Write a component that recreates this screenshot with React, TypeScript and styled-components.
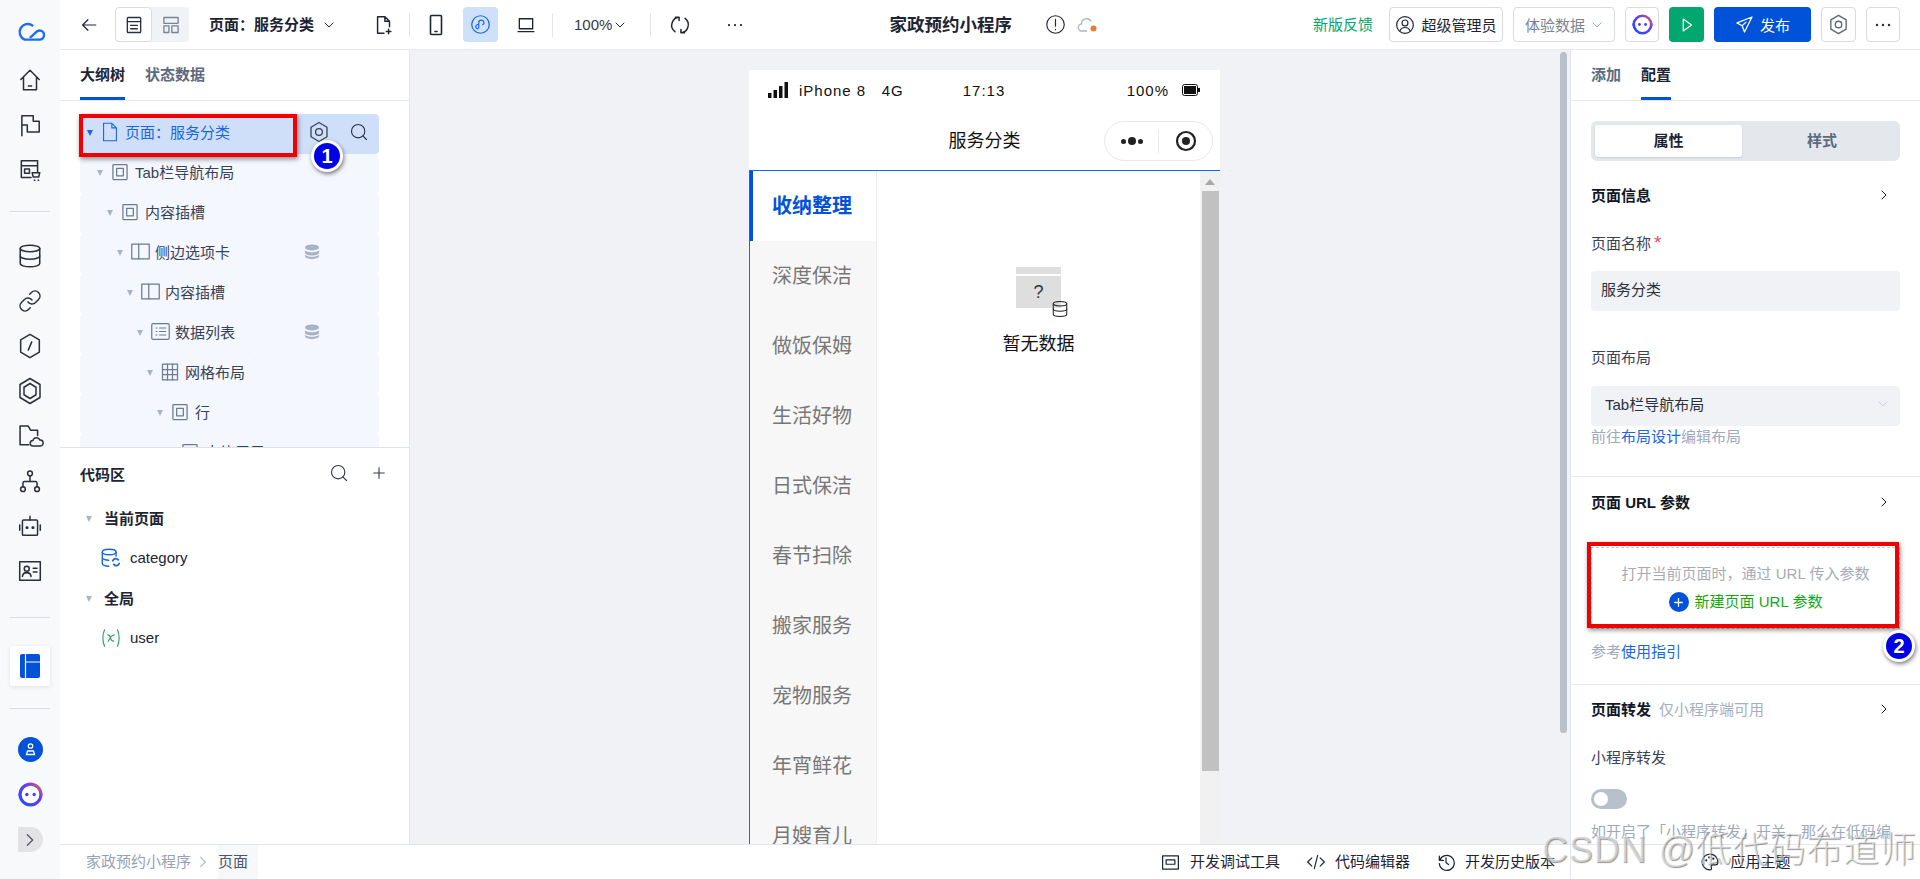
import React from 'react';
import styled, { createGlobalStyle } from 'styled-components';
import { Database, Link as LinkIcon, Search, Plus } from 'lucide-react';

const GlobalStyle = createGlobalStyle`
  html, body {
    margin: 0;
    padding: 0;
    height: 100%;
    overflow: hidden;
    background: #fff;
    font-family: "Liberation Sans", "Noto Sans CJK SC", sans-serif;
    font-size: 15px;
    color: #1d2433;
  }
  * { box-sizing: border-box; }
`;

const Page = styled.div`
  position: relative;
  display: flex;
  width: 1920px;
  height: 879px;
  overflow: hidden;
`;

const Rail = styled.nav`
  display: flex;
  flex-direction: column;
  align-items: center;
  flex: 0 0 60px;
  padding-top: 8px;
  background: #f8f9fb;
  color: #2a2f3a;
`;

const RailItem = styled.div<{ $h?: number }>`
  display: flex;
  align-items: center;
  justify-content: center;
  flex: none;
  width: 40px;
  height: ${(p) => p.$h ?? 45}px;
`;

const RailRule = styled.div<{ $before: number; $after: number }>`
  flex: none;
  width: 40px;
  height: 1px;
  margin: ${(p) => p.$before}px 0 ${(p) => p.$after}px;
  background: #d8dde5;
`;

const RailCard = styled.div`
  display: flex;
  align-items: center;
  justify-content: center;
  flex: none;
  width: 40px;
  height: 40px;
  border-radius: 3px;
  background: #fff;
  box-shadow: 0 1px 4px rgba(30, 50, 90, 0.12);
`;

const Expander = styled.div`
  display: flex;
  align-items: center;
  justify-content: center;
  flex: none;
  width: 25px;
  height: 25px;
  margin-top: 10px;
  border-radius: 0 13px 13px 0;
  background: #e3e3e5;
  color: #555c68;
`;

const Main = styled.div`
  display: flex;
  flex-direction: column;
  flex: 1;
  min-width: 0;
`;

const TopBar = styled.header`
  display: flex;
  align-items: center;
  flex: 0 0 50px;
  padding: 0 20px;
  border-bottom: 1px solid #e6e8ec;
  background: #fff;
  color: #1d2433;
`;

const Spot = styled.div<{ $ml?: number }>`
  display: flex;
  align-items: center;
  justify-content: center;
  flex: none;
  margin-left: ${(p) => p.$ml ?? 0}px;
`;

const ViewSwitch = styled.div`
  display: flex;
  flex: none;
  width: 74px;
  height: 35px;
  margin-left: 17px;
  border-radius: 4px;
  background: #f0f2f5;
`;

const ViewCell = styled.div<{ $on?: boolean }>`
  display: flex;
  align-items: center;
  justify-content: center;
  width: 37px;
  border-radius: 4px;
  background: ${(p) => (p.$on ? '#fff' : 'transparent')};
  border: 1px solid ${(p) => (p.$on ? '#d8dce3' : 'transparent')};
  color: ${(p) => (p.$on ? '#2a3040' : '#75829a')};
`;

const PageName = styled.div`
  flex: none;
  margin-left: 20px;
  font-weight: 700;
  line-height: 20px;
`;

const BarRule = styled.div<{ $ml: number }>`
  flex: none;
  width: 1px;
  height: 24px;
  margin-left: ${(p) => p.$ml}px;
  background: #e3e5e9;
`;

const DeviceBtn = styled.div<{ $on?: boolean; $ml?: number }>`
  display: flex;
  align-items: center;
  justify-content: center;
  flex: none;
  width: 35px;
  height: 35px;
  margin-left: ${(p) => p.$ml ?? 0}px;
  border-radius: 4px;
  background: ${(p) => (p.$on ? '#cfe0fb' : 'transparent')};
`;

const Zoom = styled.div`
  flex: none;
  margin-left: 21px;
  line-height: 20px;
  color: #333a48;
`;

const AppTitle = styled.div`
  flex: none;
  margin-left: 145px;
  font-size: 17.5px;
  font-weight: 700;
  line-height: 24px;
`;

const BarRight = styled.div`
  display: flex;
  align-items: center;
  gap: 10px;
  margin-left: auto;
`;

const Feedback = styled.div`
  margin-right: 6px;
  color: #00a870;
  line-height: 20px;
`;

const OutlineBtn = styled.div<{ $w: number; $muted?: boolean }>`
  display: flex;
  align-items: center;
  justify-content: center;
  gap: 6px;
  flex: none;
  width: ${(p) => p.$w}px;
  height: 35px;
  border: 1px solid #d6dae1;
  border-radius: 4px;
  background: #fff;
  color: ${(p) => (p.$muted ? '#7c8494' : '#1d2433')};
  white-space: nowrap;
`;

const SolidBtn = styled.div<{ $w: number; $bg: string }>`
  display: flex;
  align-items: center;
  justify-content: center;
  gap: 6px;
  flex: none;
  width: ${(p) => p.$w}px;
  height: 35px;
  border-radius: 4px;
  background: ${(p) => p.$bg};
  color: #fff;
`;

const Body = styled.div`
  display: flex;
  flex: 1;
  min-height: 0;
`;

const LeftPanel = styled.aside`
  display: flex;
  flex-direction: column;
  flex: 0 0 350px;
  border-right: 1px solid #e3e6eb;
  background: #fff;
`;

const Tabs = styled.div`
  display: flex;
  gap: 20px;
  flex: 0 0 50px;
  padding: 0 20px;
  border-bottom: 1px solid #e6e8ec;
`;

const Tab = styled.div<{ $on?: boolean }>`
  height: 50px;
  border-bottom: 3px solid ${(p) => (p.$on ? '#0052d9' : 'transparent')};
  color: ${(p) => (p.$on ? '#1d2433' : '#5c6a80')};
  font-weight: 700;
  line-height: 49px;
`;

const TreeArea = styled.div`
  position: relative;
  flex: 0 0 347px;
  padding: 13px 30px 0 20px;
  border-bottom: 1px solid #dfe2e8;
  overflow: hidden;
`;

const TreeRow = styled.div<{ $level: number; $active?: boolean }>`
  display: flex;
  align-items: center;
  height: 40px;
  padding: 0 0 5px ${(p) => 7 + p.$level * 10}px;
  border-radius: 4px;
  background: ${(p) => (p.$active ? '#cfdffa' : '#f4f7fe')};
  color: ${(p) => (p.$active ? '#1a66e0' : '#384256')};
`;

const Caret = styled.span<{ $blue?: boolean }>`
  flex: none;
  width: 0;
  height: 0;
  margin: 3px 9px 0 0;
  border-left: 3.5px solid transparent;
  border-right: 3.5px solid transparent;
  border-top: 6px solid ${(p) => (p.$blue ? '#1a66e0' : '#aab4c6')};
`;

const TreeIcon = styled.span`
  display: flex;
  justify-content: center;
  flex: none;
  width: 16px;
  margin-right: 7px;
  color: #6c7a92;
  svg {
    flex: none;
  }
`;

const PageIcon = styled(TreeIcon)`
  color: #1a66e0;
`;

const RowTail = styled.span<{ $gap?: number; $pr: number }>`
  display: flex;
  align-items: center;
  gap: ${(p) => p.$gap ?? 0}px;
  margin-left: auto;
  padding-right: ${(p) => p.$pr}px;
`;

const Callout = styled.div<{ $l: number; $t: number; $w: number; $h: number }>`
  position: absolute;
  left: ${(p) => p.$l}px;
  top: ${(p) => p.$t}px;
  width: ${(p) => p.$w}px;
  height: ${(p) => p.$h}px;
  border: 4px solid #f00000;
  box-shadow: 1px 2px 5px rgba(0, 0, 0, 0.45);
  pointer-events: none;
`;

const Badge = styled.div<{ $l: number; $t: number }>`
  position: absolute;
  left: ${(p) => p.$l}px;
  top: ${(p) => p.$t}px;
  width: 32px;
  height: 32px;
  border: 3px solid #fff;
  border-radius: 50%;
  background: #0000e6;
  box-shadow: 1px 2px 4px rgba(0, 0, 0, 0.5);
  color: #fff;
  font-family: "Liberation Sans", sans-serif;
  font-size: 20px;
  font-weight: 700;
  line-height: 26px;
  text-align: center;
`;

const CodeHead = styled.div`
  display: flex;
  align-items: center;
  flex: 0 0 52px;
  padding: 0 21px 2px 20px;
  font-weight: 700;
`;

const CodeTools = styled.div`
  display: flex;
  align-items: center;
  gap: 21px;
  margin-left: auto;
  color: #333a48;
`;

const CodeRow = styled.div<{ $group?: boolean }>`
  display: flex;
  align-items: center;
  flex: 0 0 40px;
  padding: 0 0 5px ${(p) => (p.$group ? 26 : 40)}px;
  font-weight: ${(p) => (p.$group ? 700 : 400)};
  color: #1d2433;
`;

const CodeCaret = styled(Caret)`
  margin-right: 12px;
`;

const CodeIcon = styled.span`
  display: flex;
  justify-content: center;
  flex: none;
  width: 22px;
  margin-right: 8px;
`;

const Stage = styled.main`
  position: relative;
  display: flex;
  justify-content: center;
  flex: 1;
  min-width: 0;
  padding: 20px 11px 0 0;
  background: #f0f2f6;
  overflow: hidden;
`;

const StageThumb = styled.div`
  position: absolute;
  top: 2px;
  right: 3px;
  width: 7px;
  height: 681px;
  border-radius: 4px;
  background: #b8c0cc;
`;

const Phone = styled.div`
  display: flex;
  flex-direction: column;
  flex: 0 0 471px;
  background: #fff;
`;

const StatusBar = styled.div`
  display: grid;
  grid-template-columns: 1fr auto 1fr;
  align-items: center;
  flex: 0 0 42px;
  padding: 0 20px 2px 19px;
  color: #111;
  letter-spacing: 1px;
`;

const StatusSide = styled.div<{ $end?: boolean }>`
  display: flex;
  align-items: center;
  justify-content: ${(p) => (p.$end ? 'flex-end' : 'flex-start')};
  gap: ${(p) => (p.$end ? 13 : 10)}px;
  white-space: pre;
`;

const NavBar = styled.div`
  position: relative;
  flex: 0 0 58px;
  font-size: 18px;
  line-height: 58px;
  text-align: center;
  color: #111;
`;

const Capsule = styled.div`
  position: absolute;
  top: 9px;
  right: 7px;
  display: flex;
  align-items: center;
  width: 109px;
  height: 40px;
  border: 1px solid #e8e8e8;
  border-radius: 20px;
  background: #fff;
`;

const CapsuleCell = styled.div`
  display: flex;
  align-items: center;
  justify-content: center;
  flex: 1;
  height: 24px;
  & + & {
    border-left: 1px solid #ececec;
  }
`;

const Dot = styled.span<{ $big?: boolean }>`
  width: ${(p) => (p.$big ? 8 : 5)}px;
  height: ${(p) => (p.$big ? 8 : 5)}px;
  margin: 0 1px;
  border-radius: 50%;
  background: #222;
`;

const SideTabs = styled.div`
  display: flex;
  flex: 1;
  min-height: 0;
  border-top: 1px solid #1268f5;
  border-left: 1px solid #1268f5;
  overflow: hidden;
`;

const SideList = styled.div`
  flex: 0 0 127px;
  border-right: 1px solid #ececec;
  background: #f7f7f7;
`;

const SideItem = styled.div<{ $on?: boolean }>`
  height: 70px;
  padding-left: ${(p) => (p.$on ? 19 : 22)}px;
  border-left: ${(p) => (p.$on ? '3px solid #0052d9' : 'none')};
  background: ${(p) => (p.$on ? '#fff' : 'transparent')};
  color: ${(p) => (p.$on ? '#0052d9' : '#777')};
  font-size: 20px;
  font-weight: ${(p) => (p.$on ? 700 : 400)};
  line-height: 70px;
`;

const SideContent = styled.div`
  display: flex;
  flex-direction: column;
  align-items: center;
  flex: 1;
  padding-top: 96px;
`;

const EmptyBox = styled.div`
  position: relative;
  width: 45px;
  height: 41px;
  border-top: 7px solid #dedede;
  background: linear-gradient(#fff 0 2px, #dedede 2px);
  color: #333;
  font-size: 18px;
  line-height: 36px;
  text-align: center;
`;

const EmptyDb = styled.span`
  position: absolute;
  right: -8px;
  bottom: -10px;
  display: flex;
  color: #222;
`;

const EmptyText = styled.div`
  margin-top: 24px;
  color: #111;
  font-size: 18px;
  line-height: 24px;
`;

const ScrollTrack = styled.div`
  display: flex;
  flex-direction: column;
  align-items: center;
  flex: 0 0 20px;
  background: #f1f1f1;
`;

const ScrollArrow = styled.span`
  width: 0;
  height: 0;
  margin: 8px 0 6px;
  border-left: 5px solid transparent;
  border-right: 5px solid transparent;
  border-bottom: 6px solid #a8a8a8;
`;

const ScrollThumb = styled.div`
  width: 17px;
  height: 580px;
  background: #c1c1c1;
`;

const RightPanel = styled.aside`
  display: flex;
  flex-direction: column;
  flex: 0 0 350px;
  border-left: 1px solid #e3e6eb;
  background: #fff;
  overflow: hidden;
`;

const Section = styled.div`
  display: flex;
  flex-direction: column;
  flex: none;
  padding: 0 20px;
`;

const Segment = styled.div`
  display: flex;
  height: 40px;
  margin-top: 20px;
  padding: 4px;
  border-radius: 6px;
  background: #e4e7ec;
`;

const SegmentItem = styled.div<{ $on?: boolean }>`
  flex: ${(p) => (p.$on ? '0 0 147px' : '1')};
  padding-left: ${(p) => (p.$on ? 0 : 6)}px;
  border-radius: 3px;
  background: ${(p) => (p.$on ? '#fff' : 'transparent')};
  box-shadow: ${(p) => (p.$on ? '0 1px 2px rgba(0,0,0,.12)' : 'none')};
  color: ${(p) => (p.$on ? '#1d2433' : '#5c6a80')};
  font-weight: 700;
  line-height: 32px;
  text-align: center;
`;

const SectionHead = styled.div<{ $mt: number }>`
  display: flex;
  align-items: center;
  height: 40px;
  margin-top: ${(p) => p.$mt}px;
  padding: 0 10px 3px 0;
  color: #111827;
  font-weight: 700;
`;

const HeadChevron = styled.span`
  display: flex;
  margin-left: auto;
`;

const HeadNote = styled.span`
  margin-left: 8px;
  color: #a6afbf;
  font-weight: 400;
`;

const FieldLabel = styled.div<{ $mt: number }>`
  height: 20px;
  margin-top: ${(p) => p.$mt}px;
  color: #384256;
  line-height: 20px;
`;

const Required = styled.span`
  margin-left: 3px;
  color: #e34d59;
  font-size: 19px;
  line-height: 0;
`;

const Field = styled.div<{ $mt: number; $pl: number }>`
  display: flex;
  align-items: center;
  height: 40px;
  margin-top: ${(p) => p.$mt}px;
  padding: 0 11px 5px ${(p) => p.$pl}px;
  border-radius: 4px;
  background: #f0f2f6;
  color: #2a3040;
`;

const Hint = styled.div<{ $mt: number }>`
  height: 20px;
  margin-top: ${(p) => p.$mt}px;
  color: #9ea9bd;
  line-height: 18px;
  white-space: nowrap;
`;

const TextLink = styled.span`
  color: #1a66e0;
`;

const Rule = styled.div<{ $mt: number }>`
  flex: 0 0 1px;
  margin-top: ${(p) => p.$mt}px;
  background: #e6e8ec;
`;

const ParamBox = styled.div`
  position: relative;
  display: flex;
  flex-direction: column;
  align-items: center;
  height: 82px;
  margin-top: 24px;
  padding-top: 16px;
  border: 1px dashed #c6cad2;
  color: #a6abb5;
`;

const ParamTip = styled.div`
  line-height: 20px;
`;

const ParamAdd = styled.div`
  display: flex;
  align-items: center;
  gap: 6px;
  margin-top: 8px;
  color: #12a812;
  line-height: 20px;
`;

const AddDot = styled.span`
  display: flex;
  align-items: center;
  justify-content: center;
  width: 20px;
  height: 20px;
  border-radius: 50%;
  background: #0052d9;
  color: #fff;
`;

const Toggle = styled.div`
  width: 36px;
  height: 20px;
  margin-top: 21px;
  padding: 3px;
  border-radius: 10px;
  background: #b8c0cc;
`;

const ToggleKnob = styled.div`
  width: 14px;
  height: 14px;
  border-radius: 50%;
  background: #fff;
`;

const BottomBar = styled.footer`
  display: flex;
  align-items: stretch;
  flex: 0 0 35px;
  border-top: 1px solid #e1e5ec;
  background: #fff;
  line-height: 34px;
`;

const Crumbs = styled.div`
  display: flex;
  align-items: center;
  padding-left: 26px;
  color: #97a1b3;
`;

const CrumbNow = styled.span`
  margin-left: 8px;
  padding-right: 10px;
  background: #f7f8fa;
  color: #4a556a;
`;

const CrumbArrow = styled.span`
  display: flex;
  margin-left: 5px;
  color: #b0b8c6;
`;

const Tools = styled.div`
  display: flex;
  align-items: center;
  gap: 26px;
  margin-left: auto;
  padding-right: 15px;
`;

const Tool = styled.div`
  display: flex;
  align-items: center;
  gap: 9px;
  color: #1d2433;
`;

const ThemeCell = styled.div`
  display: flex;
  align-items: center;
  justify-content: center;
  gap: 10px;
  flex: 0 0 350px;
  border-left: 1px solid #e3e6eb;
  color: #1d2433;
`;

const Watermark = styled.div`
  position: absolute;
  right: 3px;
  bottom: 7px;
  color: rgba(255, 255, 255, 0.55);
  font-size: 36px;
  font-weight: 300;
  letter-spacing: 0.9px;
  line-height: 44px;
  text-shadow: 1px 1px 1px rgba(90, 90, 90, 0.65);
  white-space: nowrap;
  pointer-events: none;
`;

const Ico = ({ s = 20, w = 1.6, c = 'currentColor', children }: { s?: number; w?: number; c?: string; children: React.ReactNode }) => (
  <svg width={s} height={s} viewBox="0 0 24 24" fill="none" stroke={c} strokeWidth={w} strokeLinecap="round" strokeLinejoin="round">
    {children}
  </svg>
);

const Chevron = ({ s = 12, c = 'currentColor', dir = 'down' }: { s?: number; c?: string; dir?: 'down' | 'right' }) => (
  <Ico s={s} c={c} w={2}>
    <path d={dir === 'down' ? 'M4 8l8 8 8-8' : 'M8 4l8 8-8 8'} />
  </Ico>
);

const Hexagon = ({ s = 20, c = 'currentColor', w = 1.6 }: { s?: number; c?: string; w?: number }) => (
  <Ico s={s} c={c} w={w}>
    <path d="M12 2.5l8 4.7v9.6l-8 4.7-8-4.7V7.2z" />
    <circle cx="12" cy="12" r="3.4" />
  </Ico>
);

const BotLogo = ({ s = 24, id }: { s?: number; id: string }) => (
  <svg width={s} height={s} viewBox="0 0 24 24">
    <defs>
      <linearGradient id={id} x1="0" y1="1" x2="1" y2="0">
        <stop offset="0" stopColor="#1f4dff" />
        <stop offset="0.65" stopColor="#6a3df0" />
        <stop offset="1" stopColor="#e0644a" />
      </linearGradient>
    </defs>
    <rect x="0.5" y="9" width="23" height="6" rx="3" fill={`url(#${id})`} />
    <circle cx="12" cy="12" r="10" fill="#fff" stroke={`url(#${id})`} strokeWidth="3" />
    <circle cx="8.5" cy="12" r="1.6" fill="#4a3df0" />
    <circle cx="15.5" cy="12" r="1.6" fill="#4a3df0" />
  </svg>
);

const FrameIcon = () => (
  <Ico s={20} w={1.5}>
    <rect x="3.5" y="3" width="17" height="18" rx="1" />
    <rect x="8" y="7.5" width="8" height="9" />
  </Ico>
);

const SplitIcon = () => (
  <Ico s={21} w={1.4}>
    <rect x="2" y="3.5" width="20" height="17" />
    <path d="M10 3.5v17" />
  </Ico>
);

const ListIcon = () => (
  <Ico s={21} w={1.4}>
    <rect x="2" y="3" width="20" height="18" rx="1.5" />
    <path d="M7 8h1M7 12h1M7 16h1M11 8h7M11 12h7M11 16h7" />
  </Ico>
);

const GridIcon = () => (
  <Ico s={20} w={1.5}>
    <rect x="3" y="2.5" width="18" height="19" />
    <path d="M9 2.5v19M15 2.5v19M3 9h18M3 15h18" />
  </Ico>
);

const DbBadge = () => (
  <svg width={16} height={16} viewBox="0 0 16 16" fill="#a6b2c6">
    <ellipse cx="8" cy="3.4" rx="7" ry="3" />
    <path d="M1 6.2c1.4 1.4 4 2 7 2s5.6-.6 7-2v2.6c0 1.6-3.1 2.8-7 2.8S1 10.4 1 8.8z" />
    <path d="M1 10.8c1.4 1.4 4 2 7 2s5.6-.6 7-2V12c0 1.6-3.1 3-7 3s-7-1.4-7-3z" />
  </svg>
);

const treeRows = [
  { level: 1, label: 'Tab栏导航布局', icon: <FrameIcon /> },
  { level: 2, label: '内容插槽', icon: <FrameIcon /> },
  { level: 3, label: '侧边选项卡', icon: <SplitIcon />, bound: true },
  { level: 4, label: '内容插槽', icon: <SplitIcon /> },
  { level: 5, label: '数据列表', icon: <ListIcon />, bound: true },
  { level: 6, label: '网格布局', icon: <GridIcon /> },
  { level: 7, label: '行', icon: <FrameIcon /> },
  { level: 8, label: '卡片展示', icon: <FrameIcon /> },
];

const sideItems = ['收纳整理', '深度保洁', '做饭保姆', '生活好物', '日式保洁', '春节扫除', '搬家服务', '宠物服务', '年宵鲜花', '月嫂育儿'];

const RailIcons = () => (
  <Rail>
    <RailItem $h={49}>
      <Ico s={31} c="#1a6ef0" w={1.9}>
        <path d="M13.5 6.5A6.3 6.3 0 1 0 7.5 17.5H19a3.5 3.5 0 0 0 0-7c-3 0-4.5 4-7 5" />
      </Ico>
    </RailItem>
    <RailItem>
      <Ico s={26} w={1.4}>
        <path d="M3.5 11.5L12 3l8.5 8.5M6 9.5V21h12V9.5M10.5 17.5h3" />
      </Ico>
    </RailItem>
    <RailItem>
      <Ico s={26} w={1.4}>
        <path d="M4.5 22V3.5H15v5h5.5v10H9.5V12h-5" />
      </Ico>
    </RailItem>
    <RailItem>
      <Ico s={26} w={1.4}>
        <path d="M19 14V3.5H4V19h9M4 8h15" />
        <rect x="7" y="11" width="4.5" height="4" />
        <path d="M14 14.5h7l-1 4h-5zM16 21.5h.5M19.5 21.5h.5" />
      </Ico>
    </RailItem>
    <RailRule $before={19} $after={21} />
    <RailItem>
      <Database size={26} strokeWidth={1.4} />
    </RailItem>
    <RailItem>
      <LinkIcon size={24} strokeWidth={1.5} />
    </RailItem>
    <RailItem>
      <Ico s={28} w={1.3}>
        <path d="M12 2l8 4.8v10.4L12 22l-8-4.8V6.8z" />
        <path d="M13.5 8.5l-3 7" />
      </Ico>
    </RailItem>
    <RailItem>
      <Ico s={30} w={1.2}>
        <path d="M12 2l8 4.8v10.4L12 22l-8-4.8V6.8z" />
        <path d="M12 6l4.8 3v6L12 18l-4.8-3V9z" />
      </Ico>
    </RailItem>
    <RailItem>
      <Ico s={28} w={1.3}>
        <path d="M11 19.5H3.5v-16h7l2 3.5h6v4.5" />
        <path d="M14.5 20.5a2.3 2.3 0 0 1 0-4.6 3.2 3.2 0 0 1 6-.4 2.5 2.5 0 0 1 .5 5z" />
      </Ico>
    </RailItem>
    <RailItem>
      <Ico s={26} w={1.4}>
        <circle cx="12" cy="5" r="2.2" />
        <circle cx="5.5" cy="19.5" r="2.2" />
        <circle cx="18.5" cy="19.5" r="2.2" />
        <path d="M12 7.2v5.3M5.5 17.3V14A1.5 1.5 0 0 1 7 12.5h10a1.5 1.5 0 0 1 1.5 1.5v3.3" />
      </Ico>
    </RailItem>
    <RailItem>
      <Ico s={26} w={1.4}>
        <rect x="5" y="6.5" width="14" height="14" rx="1" />
        <path d="M12 6.5V3M2.5 11v5M21.5 11v5" />
        <path d="M9 13.5h.5M14.5 13.5h.5" strokeWidth={2.4} />
      </Ico>
    </RailItem>
    <RailItem>
      <Ico s={26} w={1.4}>
        <rect x="2.5" y="3.5" width="19" height="17" />
        <circle cx="9" cy="10" r="2.3" />
        <path d="M5 17c.4-2.5 2-3.5 4-3.5s3.6 1 4 3.5M15 9.5h3.5M15 13h3.5" />
      </Ico>
    </RailItem>
    <RailRule $before={24} $after={28} />
    <RailCard>
      <svg width={20} height={24} viewBox="0 0 20 24">
        <rect width="20" height="24" rx="2" fill="#0052d9" />
        <path d="M5.5 0v24M5.5 8H20" stroke="#fff" strokeWidth="1.2" />
      </svg>
    </RailCard>
    <RailRule $before={22} $after={18} />
    <RailItem>
      <svg width={25} height={25} viewBox="0 0 25 25">
        <circle cx="12.5" cy="12.5" r="12.5" fill="#0052d9" />
        <circle cx="12.5" cy="9" r="2.2" fill="none" stroke="#fff" strokeWidth="1.3" />
        <path d="M8.5 17.5h8l-1-3.5h-6z" fill="none" stroke="#fff" strokeWidth="1.3" />
      </svg>
    </RailItem>
    <RailItem>
      <BotLogo s={25} id="botRail" />
    </RailItem>
    <Expander>
      <Chevron s={16} dir="right" />
    </Expander>
  </Rail>
);

const Header = () => (
  <TopBar>
    <Spot>
      <Ico s={18}>
        <path d="M21 12H4M10.5 5l-7 7 7 7" />
      </Ico>
    </Spot>
    <ViewSwitch>
      <ViewCell $on>
        <Ico s={20}>
          <rect x="4" y="3" width="16" height="18" rx="1" />
          <path d="M4 8h16M8 12.5h8M8 16.5h8" />
        </Ico>
      </ViewCell>
      <ViewCell>
        <Ico s={20}>
          <rect x="3.5" y="3" width="17" height="7" />
          <rect x="3.5" y="13" width="6" height="8" />
          <rect x="13" y="13" width="7.5" height="8" />
        </Ico>
      </ViewCell>
    </ViewSwitch>
    <PageName>页面：服务分类</PageName>
    <Spot $ml={9}>
      <Chevron />
    </Spot>
    <Spot $ml={38}>
      <Ico s={22}>
        <path d="M12 21H5V3h8l5 5v6M13 3v5h5M17 16.5v5M14.5 19h5" />
      </Ico>
    </Spot>
    <BarRule $ml={14} />
    <DeviceBtn $ml={8}>
      <Ico s={24}>
        <rect x="6.5" y="2.5" width="11" height="19" rx="1" />
        <path d="M11 18.5h2" />
      </Ico>
    </DeviceBtn>
    <DeviceBtn $on $ml={10}>
      <Ico s={21} c="#1a66e0" w={1.4}>
        <circle cx="12" cy="12" r="10" />
        <path d="M9 17a2.5 2.5 0 0 1-2-3.8c.6-1 2-1.5 2.5-1.5M10 16v-6a3 3 0 0 1 3-3 2.8 2.8 0 0 1 1.5 5.2" />
      </Ico>
    </DeviceBtn>
    <DeviceBtn $ml={10}>
      <Ico s={20}>
        <rect x="4" y="4.5" width="16" height="12" />
        <path d="M2.5 20h19" />
      </Ico>
    </DeviceBtn>
    <BarRule $ml={9} />
    <Zoom>100%</Zoom>
    <Spot $ml={2}>
      <Chevron />
    </Spot>
    <BarRule $ml={24} />
    <Spot $ml={18}>
      <Ico s={22}>
        <path d="M11 3.5a8.8 8.8 0 0 0-4.5 15.8M13 20.5a8.8 8.8 0 0 0 4.5-15.8M7 3.5h4V7M17 20.5h-4V17" />
      </Ico>
    </Spot>
    <Spot $ml={35}>
      <Ico s={18}>
        <circle cx="4" cy="12" r=".7" />
        <circle cx="12" cy="12" r=".7" />
        <circle cx="20" cy="12" r=".7" />
      </Ico>
    </Spot>
    <AppTitle>家政预约小程序</AppTitle>
    <Spot $ml={33}>
      <Ico s={21} w={1.3}>
        <circle cx="12" cy="12" r="10" />
        <path d="M12 6v8M12 17.5v.5" />
      </Ico>
    </Spot>
    <Spot $ml={11}>
      <svg width={22} height={20} viewBox="0 0 22 20" fill="none">
        <path d="M10 16H5a3.5 3.5 0 0 1-.5-7A5 5 0 0 1 14 6.5" stroke="#a9b3c3" strokeWidth="1.3" />
        <circle cx="16.5" cy="13.5" r="3" fill="#ed7b2f" />
      </svg>
    </Spot>
    <BarRight>
      <Feedback>新版反馈</Feedback>
      <OutlineBtn $w={114}>
        <Ico s={20} w={1.4}>
          <circle cx="12" cy="12" r="10" />
          <circle cx="12" cy="9.5" r="3.5" />
          <path d="M6 19c1-3 3.5-4 6-4s5 1 6 4" />
        </Ico>
        超级管理员
      </OutlineBtn>
      <OutlineBtn $w={102} $muted>
        体验数据
        <Chevron s={12} c="#a0a8b5" />
      </OutlineBtn>
      <OutlineBtn $w={34}>
        <BotLogo s={21} id="botBar" />
      </OutlineBtn>
      <SolidBtn $w={35} $bg="#00a870">
        <Ico s={18}>
          <path d="M7 4l11 8-11 8z" />
        </Ico>
      </SolidBtn>
      <SolidBtn $w={97} $bg="#0052d9">
        <Ico s={19}>
          <path d="M21.5 2.5L2.5 10 9 13.5l3 8zM9 13.5L14 9" />
        </Ico>
        发布
      </SolidBtn>
      <OutlineBtn $w={35}>
        <Hexagon s={23} c="#58657d" w={1.4} />
      </OutlineBtn>
      <OutlineBtn $w={34}>
        <Ico s={18} w={2}>
          <circle cx="4" cy="12" r=".6" />
          <circle cx="12" cy="12" r=".6" />
          <circle cx="20" cy="12" r=".6" />
        </Ico>
      </OutlineBtn>
    </BarRight>
  </TopBar>
);

const Outline = () => (
  <LeftPanel>
    <Tabs>
      <Tab $on>大纲树</Tab>
      <Tab>状态数据</Tab>
    </Tabs>
    <TreeArea>
      <TreeRow $level={0} $active>
        <Caret $blue />
        <PageIcon>
          <Ico s={22} w={1.2}>
            <path d="M5 2.5h9l5 5v14H5zM14 2.5v5h5" />
          </Ico>
        </PageIcon>
        页面：服务分类
        <RowTail $gap={18} $pr={10}>
          <Hexagon s={24} c="#3a4356" w={1.3} />
          <Search size={20} color="#2a3040" strokeWidth={1.4} />
        </RowTail>
      </TreeRow>
      {treeRows.map((row) => (
        <TreeRow key={`${row.level}${row.label}`} $level={row.level}>
          <Caret />
          <TreeIcon>{row.icon}</TreeIcon>
          {row.label}
          {row.bound && (
            <RowTail $pr={59}>
              <DbBadge />
            </RowTail>
          )}
        </TreeRow>
      ))}
      <Callout $l={19} $t={13} $w={218} $h={43} />
      <Badge $l={251} $t={39}>1</Badge>
    </TreeArea>
    <CodeHead>
      代码区
      <CodeTools>
        <Search size={20} strokeWidth={1.4} />
        <Plus size={18} strokeWidth={1.5} />
      </CodeTools>
    </CodeHead>
    <CodeRow $group>
      <CodeCaret />
      当前页面
    </CodeRow>
    <CodeRow>
      <CodeIcon>
        <Ico s={22} c="#1a66e0" w={1.5}>
          <ellipse cx="10" cy="5.5" rx="7.5" ry="3" />
          <path d="M2.5 5.5V18c0 1.5 3 3 7 3M2.5 11.5c0 1.5 3 3 7 3M17.5 5.5V10" />
          <path d="M14 15a3.5 3.5 0 0 1 6-1M21 18a3.5 3.5 0 0 1-6 1" strokeWidth={2} />
        </Ico>
      </CodeIcon>
      category
    </CodeRow>
    <CodeRow $group>
      <CodeCaret />
      全局
    </CodeRow>
    <CodeRow>
      <CodeIcon>
        <Ico s={24} c="#2ba471" w={1.3}>
          <path d="M5 3c-2.5 5-2.5 13 0 18M19 3c2.5 5 2.5 13 0 18M8.5 8.5c2 0 2.5 1 3 3.5s1 3.5 3.5 3.5M15.5 8.5c-2 0-5 4-6.5 7" />
        </Ico>
      </CodeIcon>
      user
    </CodeRow>
  </LeftPanel>
);

const Simulator = () => (
  <Stage>
    <Phone>
      <StatusBar>
        <StatusSide>
          <svg width={21} height={16} viewBox="0 0 21 16" fill="#111">
            <rect x="0" y="11" width="3.5" height="5" />
            <rect x="5.5" y="8" width="3.5" height="8" />
            <rect x="11" y="4" width="3.5" height="12" />
            <rect x="16.5" y="0" width="3.5" height="16" />
          </svg>
          {'iPhone 8   4G'}
        </StatusSide>
        <span>17:13</span>
        <StatusSide $end>
          100%
          <svg width={18} height={12} viewBox="0 0 18 12">
            <rect x="0.5" y="0.5" width="15" height="11" rx="2" fill="#fff" stroke="#111" />
            <rect x="2" y="2" width="12" height="8" fill="#111" />
            <rect x="16" y="4" width="2" height="4" fill="#111" />
          </svg>
        </StatusSide>
      </StatusBar>
      <NavBar>
        服务分类
        <Capsule>
          <CapsuleCell>
            <Dot />
            <Dot $big />
            <Dot />
          </CapsuleCell>
          <CapsuleCell>
            <svg width={22} height={22} viewBox="0 0 22 22">
              <circle cx="11" cy="11" r="9" fill="none" stroke="#222" strokeWidth="2.2" />
              <circle cx="11" cy="11" r="4" fill="#222" />
            </svg>
          </CapsuleCell>
        </Capsule>
      </NavBar>
      <SideTabs>
        <SideList>
          {sideItems.map((item, i) => (
            <SideItem key={item} $on={i === 0}>{item}</SideItem>
          ))}
        </SideList>
        <SideContent>
          <EmptyBox>
            ?
            <EmptyDb>
              <Database size={18} strokeWidth={1.4} />
            </EmptyDb>
          </EmptyBox>
          <EmptyText>暂无数据</EmptyText>
        </SideContent>
        <ScrollTrack>
          <ScrollArrow />
          <ScrollThumb />
        </ScrollTrack>
      </SideTabs>
    </Phone>
    <StageThumb />
  </Stage>
);

const Config = () => (
  <RightPanel>
    <Tabs>
      <Tab>添加</Tab>
      <Tab $on>配置</Tab>
    </Tabs>
    <Section>
      <Segment>
        <SegmentItem $on>属性</SegmentItem>
        <SegmentItem>样式</SegmentItem>
      </Segment>
      <SectionHead $mt={15}>
        页面信息
        <HeadChevron>
          <Chevron dir="right" />
        </HeadChevron>
      </SectionHead>
      <FieldLabel $mt={18}>
        页面名称<Required>*</Required>
      </FieldLabel>
      <Field $mt={17} $pl={10}>服务分类</Field>
      <FieldLabel $mt={37}>页面布局</FieldLabel>
      <Field $mt={18} $pl={14}>
        Tab栏导航布局
        <HeadChevron>
          <Chevron c="#c9ced6" />
        </HeadChevron>
      </Field>
      <Hint $mt={2}>
        前往<TextLink>布局设计</TextLink>编辑布局
      </Hint>
    </Section>
    <Rule $mt={28} />
    <Section>
      <SectionHead $mt={6}>
        页面 URL 参数
        <HeadChevron>
          <Chevron dir="right" />
        </HeadChevron>
      </SectionHead>
      <ParamBox>
        <ParamTip>打开当前页面时，通过 URL 传入参数</ParamTip>
        <ParamAdd>
          <AddDot>
            <Plus size={13} strokeWidth={2.4} />
          </AddDot>
          新建页面 URL 参数
        </ParamAdd>
        <Callout $l={-5} $t={-6} $w={312} $h={86} />
        <Badge $l={291} $t={82}>2</Badge>
      </ParamBox>
      <Hint $mt={14}>
        参考<TextLink>使用指引</TextLink>
      </Hint>
    </Section>
    <Rule $mt={21} />
    <Section>
      <SectionHead $mt={5}>
        页面转发
        <HeadNote>仅小程序端可用</HeadNote>
        <HeadChevron>
          <Chevron dir="right" />
        </HeadChevron>
      </SectionHead>
      <FieldLabel $mt={18}>小程序转发</FieldLabel>
      <Toggle>
        <ToggleKnob />
      </Toggle>
      <Hint $mt={14}>如开启了「小程序转发」开关，那么在低码编</Hint>
    </Section>
  </RightPanel>
);

const Footer = () => (
  <BottomBar>
    <Crumbs>
      家政预约小程序
      <CrumbArrow>
        <Chevron s={14} dir="right" />
      </CrumbArrow>
      <CrumbNow>页面</CrumbNow>
    </Crumbs>
    <Tools>
      <Tool>
        <Ico s={21} w={1.4}>
          <rect x="3" y="4.5" width="18" height="15" />
          <rect x="7" y="9" width="10" height="5" />
        </Ico>
        开发调试工具
      </Tool>
      <Tool>
        <Ico s={20} w={1.4}>
          <path d="M7 7l-5 5 5 5M17 7l5 5-5 5M14 4l-4 16" />
        </Ico>
        代码编辑器
      </Tool>
      <Tool>
        <Ico s={20} w={1.5}>
          <path d="M4 5v5h5M4.5 10a9 9 0 1 1-.5 4M12 7v5.5l3 2.5" />
        </Ico>
        开发历史版本
      </Tool>
    </Tools>
    <ThemeCell>
      <Ico s={20} w={1.5}>
        <path d="M12 2.5a9.5 9.5 0 1 0 0 19c2 0 2-1.5 1.500-3s0-3 2-3h3c2 0 3-1.500 3-3.500 0-5.500-4.500-9.500-9.500-9.500z" />
        <circle cx="7.5" cy="10" r=".6" />
        <circle cx="11" cy="6.5" r=".6" />
        <circle cx="16" cy="8" r=".6" />
      </Ico>
      应用主题
    </ThemeCell>
  </BottomBar>
);

export default function App() {
  return (
    <Page>
      <GlobalStyle />
      <RailIcons />
      <Main>
        <Header />
        <Body>
          <Outline />
          <Simulator />
          <Config />
        </Body>
        <Footer />
      </Main>
      <Watermark>CSDN @低代码布道师</Watermark>
    </Page>
  );
}
